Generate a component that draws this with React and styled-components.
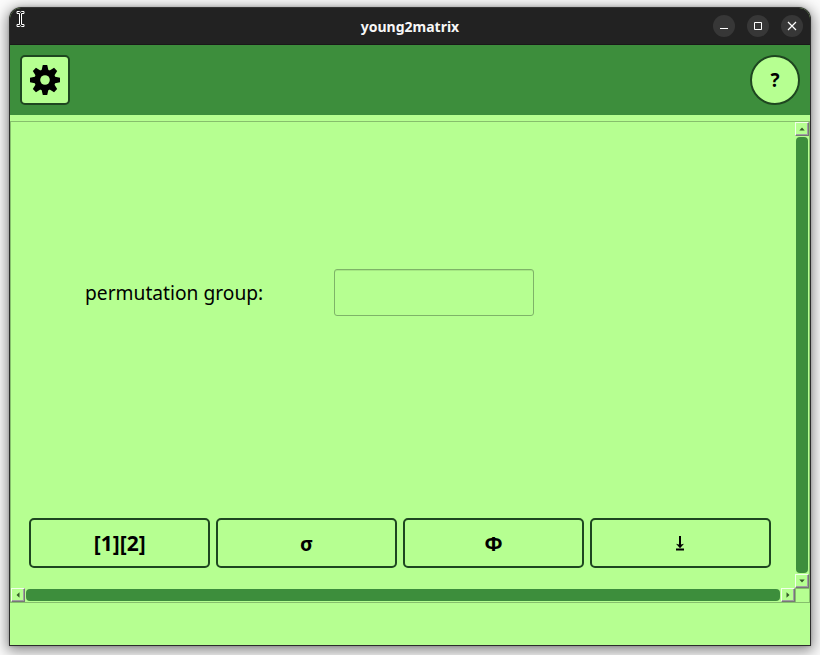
import React from "react";
import styled, { createGlobalStyle } from "styled-components";

const light = "#b6ff91";
const green = "#3d8e3c";
const dark = "#1e4620";

const Global = createGlobalStyle`
  * { box-sizing: border-box; }
  body { margin: 0; background: #fbfbfb; overflow: hidden; font-family: "Noto Sans", "Open Sans", sans-serif; }
`;
const Desktop = styled.div`
  width: 820px; height: 655px; padding: 7px 9px 9px; overflow: hidden;
`;
const Window = styled.main`
  width: 802px; height: 639px; display: flex; flex-direction: column;
  border: 1px solid #2c2c2c; border-top-color: #343434; border-radius: 12px 12px 0 0;
  background: ${light}; overflow: hidden;
  box-shadow: 0 3px 14px 2px rgba(0,0,0,.45), 0 0 3px rgba(0,0,0,.2);
`;
const TitleBar = styled.header`
  height: 37px; flex: none; display: grid; grid-template-columns: 100px 1fr 100px;
  align-items: center; background: #222; border-bottom: 1px solid #191919;
`;
const Caret = styled.svg`
  width: 9px; height: 18px; margin: -14px 0 0 6px; display: block;
`;
const Title = styled.h1`
  margin: 2px 0 0; text-align: center; color: #f7f7f7; font-size: 14px; line-height: 20px; font-weight: 700;
`;
const Controls = styled.div`
  display: flex; gap: 12px; justify-content: flex-end; padding-right: 7px;
`;
const Control = styled.button`
  width: 22px; height: 22px; padding: 0; border: 0; border-radius: 50%; background: #373737; display: grid; place-items: center;
`;
const Toolbar = styled.nav`
  height: 70px; flex: none; padding: 10px; display: flex; justify-content: space-between; background: ${green};
`;
const ToolButton = styled.button`
  width: 50px; height: 50px; padding: 0; display: grid; place-items: center;
  border: 2px solid ${dark}; border-radius: ${p => (p.$round ? "50%" : "5px")};
  background: ${light}; color: #000; font: 700 19px/24px "Noto Sans", sans-serif;
`;
const ScrollFrame = styled.section`
  width: 800px; height: 482px; margin-top: 6px; flex: none; display: grid;
  grid-template: 466px 14px / 784px 14px;
  border: 1px solid #86bf6c;
`;
const Content = styled.div`
  display: flex; flex-direction: column; padding: 0 24px 20px 18px;
`;
const Field = styled.label`
  height: 340px; margin-bottom: 56px; padding-left: 56px; display: flex; align-items: center;
  font-size: 20px; color: #000;
`;
const FieldText = styled.span`
  width: 249px; white-space: nowrap;
`;
const Scaled = styled.span`
  display: inline-block; transform-origin: ${p => p.$origin || "center"};
  transform: scale(${p => p.$x}, ${p => p.$y || 1});
`;
const Input = styled.input`
  width: 200px; height: 47px; border: 1px solid #7eb368; border-radius: 3px; background: transparent; outline: 0;
  box-shadow: inset 0 1px #a5e783;
`;
const Actions = styled.div`
  display: grid; grid-template-columns: repeat(4, 181px); gap: 6px;
`;
const Action = styled.button`
  height: 50px; padding: 2px 0 0; border: 2px solid ${dark}; border-radius: 5px; background: ${light};
  display: grid; place-items: center; color: #000; font: 700 20px/26px "Noto Sans", sans-serif;
`;
const ScrollBar = styled.div`
  display: flex; flex-direction: ${p => (p.$vertical ? "column" : "row")}; align-items: center; gap: 1px;
`;
const Thumb = styled.div`
  flex: 1; border-radius: 4px; background: ${green};
  ${p => (p.$vertical ? "width: 12px;" : "height: 12px;")}
`;
const Step = styled.button`
  width: 14px; height: 14px; flex: none; padding: 0; display: grid; place-items: center;
  border: 1px solid; border-color: #f1ffe9 #777 #777 #f1ffe9; background: ${light};
  box-shadow: inset -1px -1px #a0a0a0;
`;
const Corner = styled.div`
  border-left: 1px solid #86bf6c; border-top: 1px solid #86bf6c;
`;
const rotations = { up: 0, right: 90, down: 180, left: 270 };
const Arrow = ({ dir }) => (
  <svg width="6" height="6" viewBox="0 0 6 6"><path transform={`rotate(${rotations[dir]} 3 3)`} d="M.3 4.5 3 1.5l2.7 3z" fill="#355b29" /></svg>
);
const Gear = () => (
  <svg width="32" height="32" viewBox="-16 -16 32 32">
    {[0, 45, 90, 135].map(a => <path key={a} transform={`rotate(${a})`} d="M-3.6-9-2.2-15h4.4L3.6-9V9L2.2 15h-4.4L-3.6 9z" />)}
    <circle r="10.6" /><circle r="4.8" fill={light} />
  </svg>
);

export default function App() {
  return (
    <><Global /><Desktop><Window>
      <TitleBar>
        <Caret viewBox="0 0 9 18"><path d="M1 1.5h2.5l1 .8 1-.8H8v2H5.5v11H8v2H5.5l-1-.8-1 .8H1v-2h2.5v-11H1z" fill="#111" stroke="#fff" /></Caret>
        <Title><Scaled $x={1}>young2matrix</Scaled></Title>
        <Controls>
          <Control aria-label="Minimize"><svg width="10" height="10"><path d="M1 7.5h8" stroke="#fff" /></svg></Control>
          <Control aria-label="Maximize"><svg width="10" height="10"><path d="M1.5 1.5h7v7h-7z" fill="none" stroke="#fff" /></svg></Control>
          <Control aria-label="Close"><svg width="10" height="10"><path d="m1 1 8 8M9 1 1 9" stroke="#fff" strokeWidth="1.2" /></svg></Control>
        </Controls>
      </TitleBar>
      <Toolbar>
        <ToolButton aria-label="Settings"><Gear /></ToolButton>
        <ToolButton $round>?</ToolButton>
      </Toolbar>
      <ScrollFrame>
        <Content>
          <Field><FieldText><Scaled $x={0.96} $origin="left">permutation group:</Scaled></FieldText><Input /></Field>
          <Actions>
            <Action><Scaled $x={1.05} $y={1.05}>[1][2]</Scaled></Action><Action>σ</Action><Action>Φ</Action>
            <Action aria-label="Download"><svg width="11" height="16" viewBox="0 0 11 16"><path d="M4 0h2v8.5l3-.8L5 12.3 1 7.7l3 .8zM1 12.5h8v2H1z" /></svg></Action>
          </Actions>
        </Content>
        <ScrollBar $vertical><Step><Arrow dir="up" /></Step><Thumb $vertical /><Step><Arrow dir="down" /></Step></ScrollBar>
        <ScrollBar><Step><Arrow dir="left" /></Step><Thumb /><Step><Arrow dir="right" /></Step></ScrollBar>
        <Corner />
      </ScrollFrame>
    </Window></Desktop></>
  );
}
